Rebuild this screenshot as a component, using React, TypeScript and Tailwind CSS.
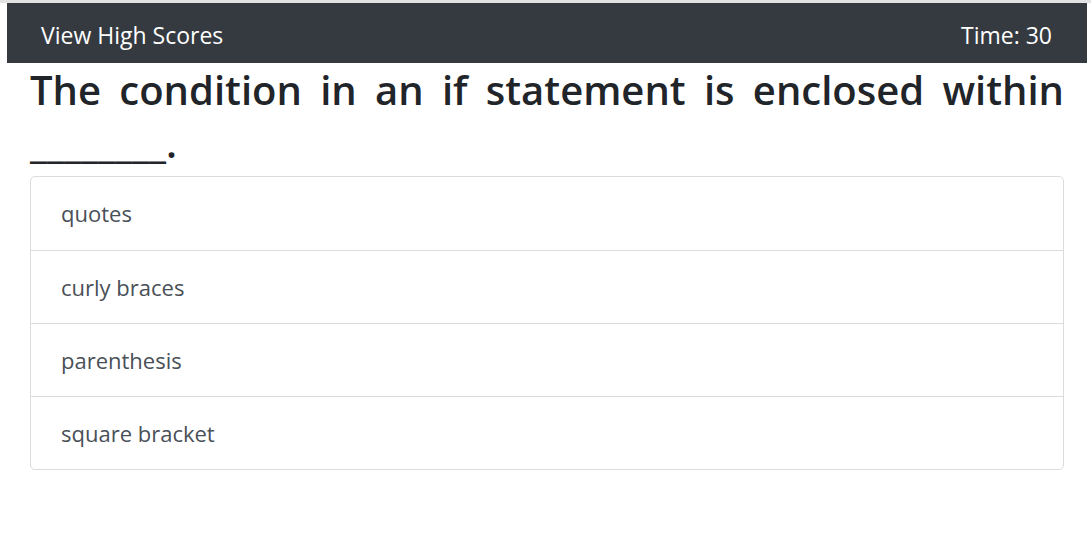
import React from "react";

const choices = ["quotes", "curly braces", "parenthesis", "square bracket"];

export default function App() {
  return (
    <div
      className="min-h-[555px] bg-white border-t-[3px] border-[#e2e2e2]"
      style={{ fontFamily: '"Open Sans", "Noto Sans", sans-serif' }}
    >
      <nav className="ml-[7px] mr-[4px] h-[60px] bg-[#343a40] flex items-center justify-between pt-[4px] pl-[34px] pr-[35px] text-white text-[23px]">
        <span>View High Scores</span>
        <span>Time: 30</span>
      </nav>

      <div className="pl-[30px] pr-[27px]">
        <h1 className="text-[#212529] text-[40px] leading-[53px] font-semibold text-justify">
          The condition in an if statement is enclosed within ________.
        </h1>

        <ul className="mt-[7px] border border-[#dcdcdc] rounded-[5px]">
          {choices.map((choice, i) => (
            <li
              key={choice}
              className={
                "h-[73px] flex items-center pl-[30px] text-[22px] text-[#495057] " +
                (i > 0 ? "border-t border-[#dcdcdc]" : "")
              }
            >
              {choice}
            </li>
          ))}
        </ul>
      </div>
    </div>
  );
}
